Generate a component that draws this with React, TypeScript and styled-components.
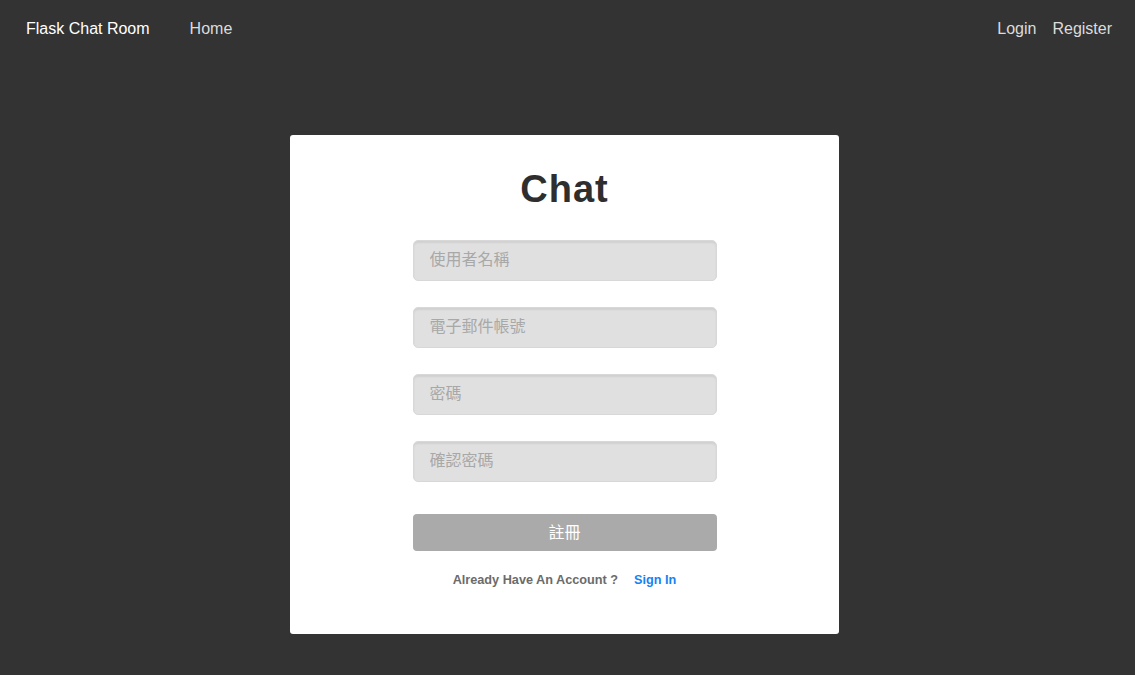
import React from "react";
import styled, { createGlobalStyle } from "styled-components";

const Global = createGlobalStyle`
  html, body { margin: 0; padding: 0; background: #333333; }
  body { font-family: "Liberation Sans", Arial, "Noto Sans CJK TC", sans-serif; }
  * { box-sizing: border-box; }
`;

const Page = styled.div`
  min-height: 675px;
  background: #333333;
`;

const Nav = styled.nav`
  height: 57px;
  display: flex;
  align-items: center;
  padding: 0 23px 0 26px;
  font-size: 16px;
`;

const Brand = styled.a`
  color: #ffffff;
  text-decoration: none;
  margin-right: 40px;
`;

const NavLink = styled.a<{ $gap?: number }>`
  color: #dcdcdc;
  text-decoration: none;
  margin-left: ${(p) => p.$gap ?? 0}px;
`;

const Spacer = styled.div`
  flex: 1;
`;

const Card = styled.div`
  width: 549px;
  margin: 78px 0 0 290px;
  background: #ffffff;
  border-radius: 3px;
  padding: 32px 0 46px;
  display: flex;
  flex-direction: column;
  align-items: center;
`;

const Title = styled.h1`
  margin: 0;
  font-family: "Liberation Sans", Arial, sans-serif;
  font-weight: 700;
  font-size: 38px;
  letter-spacing: 1px;
  line-height: 44px;
  color: #2e2e2e;
`;

const Form = styled.form`
  margin-top: 29px;
  width: 304px;
  display: flex;
  flex-direction: column;
  gap: 26px;
`;

const Input = styled.input`
  width: 100%;
  height: 41px;
  border: 1px solid #d8d8d8;
  outline: none;
  border-radius: 5px;
  background: #e0e0e0;
  box-shadow: inset 0 2px 2px rgba(0, 0, 0, 0.07);
  padding: 0 0 2px 16px;
  font-size: 16px;
  font-family: "Liberation Sans", Arial, "Noto Sans CJK TC", sans-serif;
  color: #333;
  &::placeholder {
    color: #a8a8a8;
  }
`;

const Button = styled.button`
  margin-top: 6px;
  height: 37px;
  width: 100%;
  border: none;
  border-radius: 4px;
  background: #aaaaaa;
  color: #ffffff;
  font-size: 16px;
  padding: 0 0 3px;
  font-family: "Liberation Sans", Arial, "Noto Sans CJK TC", sans-serif;
  cursor: pointer;
`;

const Footer = styled.p`
  margin: 21px 0 0;
  line-height: 16px;
  font-size: 12.7px;
  font-weight: 700;
  color: #6b6b6b;
  display: flex;
  gap: 16px;
`;

const SignIn = styled.a`
  color: #1583f5;
  text-decoration: none;
`;

export default function App() {
  return (
    <Page>
      <Global />
      <Nav>
        <Brand href="#">Flask Chat Room</Brand>
        <NavLink href="#">Home</NavLink>
        <Spacer />
        <NavLink href="#">Login</NavLink>
        <NavLink href="#" $gap={16}>Register</NavLink>
      </Nav>
      <Card>
        <Title>Chat</Title>
        <Form onSubmit={(e) => e.preventDefault()}>
          <Input placeholder="使用者名稱" />
          <Input placeholder="電子郵件帳號" />
          <Input type="password" placeholder="密碼" />
          <Input type="password" placeholder="確認密碼" />
          <Button type="submit">註冊</Button>
        </Form>
        <Footer>
          <span>Already Have An Account ?</span>
          <SignIn href="#">Sign In</SignIn>
        </Footer>
      </Card>
    </Page>
  );
}
